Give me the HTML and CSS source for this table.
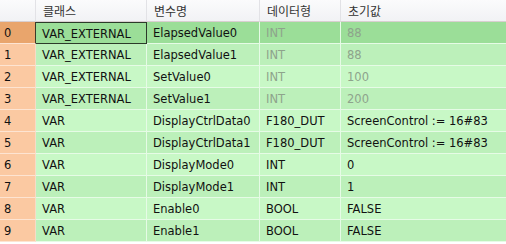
FILE: index.html
```html
<!DOCTYPE html>
<html>
<head>
<meta charset="utf-8">
<link rel="stylesheet" href="styles.css">
</head>
<body>
<div class="grid">
  <div class="hd idx"></div>
  <div class="hd">클래스</div>
  <div class="hd">변수명</div>
  <div class="hd">데이터형</div>
  <div class="hd last">초기값</div>

  <div class="row sel">
    <div class="c idx">0</div><div class="c focus">VAR_EXTERNAL</div><div class="c">ElapsedValue0</div><div class="c dim">INT</div><div class="c dim last">88</div>
  </div>
  <div class="row odd">
    <div class="c idx">1</div><div class="c">VAR_EXTERNAL</div><div class="c">ElapsedValue1</div><div class="c dim">INT</div><div class="c dim last">88</div>
  </div>
  <div class="row">
    <div class="c idx">2</div><div class="c">VAR_EXTERNAL</div><div class="c">SetValue0</div><div class="c dim">INT</div><div class="c dim last">100</div>
  </div>
  <div class="row odd">
    <div class="c idx">3</div><div class="c">VAR_EXTERNAL</div><div class="c">SetValue1</div><div class="c dim">INT</div><div class="c dim last">200</div>
  </div>
  <div class="row">
    <div class="c idx">4</div><div class="c">VAR</div><div class="c">DisplayCtrlData0</div><div class="c">F180_DUT</div><div class="c last">ScreenControl := 16#83</div>
  </div>
  <div class="row odd">
    <div class="c idx">5</div><div class="c">VAR</div><div class="c">DisplayCtrlData1</div><div class="c">F180_DUT</div><div class="c last">ScreenControl := 16#83</div>
  </div>
  <div class="row">
    <div class="c idx">6</div><div class="c">VAR</div><div class="c">DisplayMode0</div><div class="c">INT</div><div class="c last">0</div>
  </div>
  <div class="row odd">
    <div class="c idx">7</div><div class="c">VAR</div><div class="c">DisplayMode1</div><div class="c">INT</div><div class="c last">1</div>
  </div>
  <div class="row">
    <div class="c idx">8</div><div class="c">VAR</div><div class="c">Enable0</div><div class="c">BOOL</div><div class="c last">FALSE</div>
  </div>
  <div class="row odd">
    <div class="c idx">9</div><div class="c">VAR</div><div class="c">Enable1</div><div class="c">BOOL</div><div class="c last">FALSE</div>
  </div>
</div>
</body>
</html>
```
FILE: styles.css
```css
html, body {
  margin: 0;
  padding: 0;
  background: #ffffff;
}
body {
  font-family: "DejaVu Sans", "Noto Sans CJK KR", sans-serif;
  font-size: 11.5px;
  color: #111;
}
.grid {
  display: grid;
  grid-template-columns: 36px 111px 113px 81px 1fr;
  grid-auto-rows: 22px;
  width: 506px;
}
.hd {
  height: 22px;
  box-sizing: border-box;
  background: linear-gradient(#fbfbfc, #f1f2f5);
  border-bottom: 1px solid #d9cfd0;
  border-right: 1px solid #e2e2e6;
  padding-left: 7px;
  line-height: 21px;
  font-family: "Noto Sans CJK KR", sans-serif;
  font-size: 12px;
  color: #333;
}
.hd.last { border-right: none; }
.row {
  display: contents;
}
.c {
  box-sizing: border-box;
  background: #c8f8c6;
  border-right: 1px solid #e6fbe6;
  border-bottom: 1px solid #e6fbe6;
  padding-left: 6px;
  line-height: 22px;
  white-space: nowrap;
  overflow: hidden;
}
.c.last { border-right: none; }
.row.odd .c { background: #bcf0ba; }
.c.idx {
  background: #fbc9a2;
  padding-left: 4px;
  border-right: 1px solid #f6dcc8;
  border-bottom: 1px solid #fde4d2;
}
.row.odd .c.idx { background: #fbc9a2; }
.row.sel .c { background: #9bde98; }
.row.sel .c.idx { background: #e9a56c; border-right: 1px solid #3a3a2a; }
.c.focus {
  border: 1px solid #2c3a2a;
  border-left: none;
  padding-left: 6px;
}
.c.dim { color: #8ea38c; }
```
